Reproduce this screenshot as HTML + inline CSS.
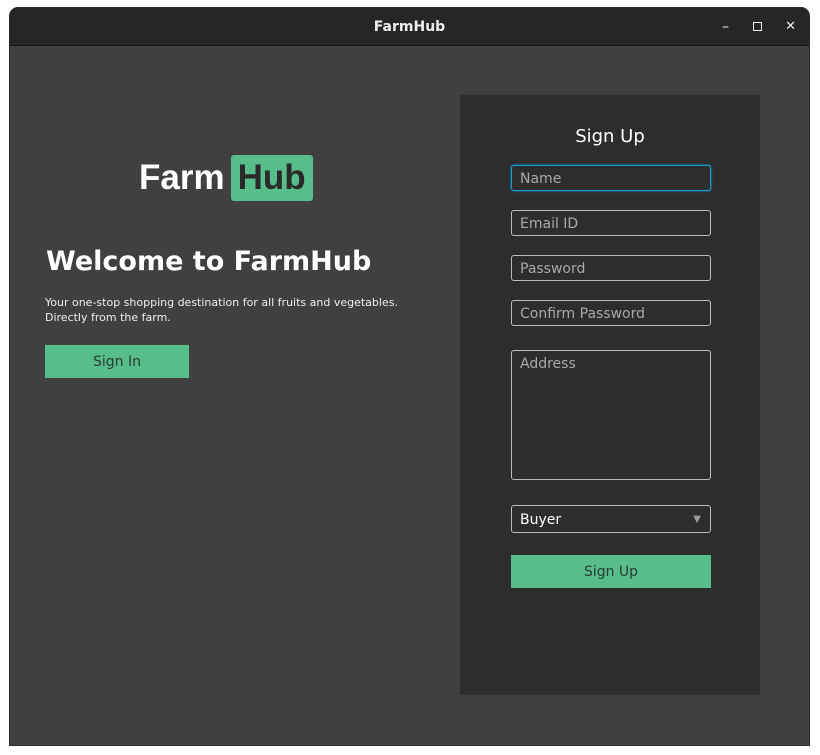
<!DOCTYPE html>
<html><head><style>
body{margin:0;width:820px;height:755px;background:#fff;position:relative;overflow:hidden;font-family:"DejaVu Sans","Liberation Sans",sans-serif;}
.win{position:absolute;left:9px;top:7px;width:801px;height:739px;background:#404040;border:1px solid #2a2a2a;border-radius:9px 9px 0 0;box-sizing:border-box;overflow:hidden}
.tb{position:absolute;left:0;top:0;right:0;height:37px;background:#262626;border-bottom:1px solid #151515;color:#eee;font-weight:bold;font-size:14px;text-align:center;line-height:38px}
.ab{position:absolute;}
.panel{position:absolute;left:460px;top:95px;width:300px;height:600px;background:#2d2d2d}
.in{position:absolute;left:511px;width:200px;height:26px;border:1px solid #bdbdbd;border-radius:3px;box-sizing:border-box;color:#a9a9a9;font-size:14px;padding-left:8px;line-height:26px;background:#2d2d2d}
.btn{position:absolute;background:#57be8b;color:#2a3a32;font-size:14px;text-align:center}
</style></head><body>
<div class="win"><div class="tb">FarmHub
<span style="position:absolute;right:80px;top:0;font-weight:normal">&#8211;</span>
<span style="position:absolute;right:47px;top:14px;width:7px;height:7px;border:1px solid #eee"></span>
<span style="position:absolute;right:13px;top:0;font-weight:normal;font-size:13px">✕</span>
</div></div>
<div class="ab" style="left:139px;top:155px;font-family:'Liberation Sans',sans-serif;font-weight:bold;font-size:35px;color:#fff;line-height:46px">Farm<span style="display:inline-block;background:#57be8b;color:#2a2a2a;border-radius:3px;width:82px;text-align:center;margin-left:6px;height:46px;vertical-align:top;line-height:46px">Hub</span></div>
<div class="ab" style="left:46px;top:246px;font-weight:bold;font-size:27px;color:#fff">Welcome to FarmHub</div>
<div class="ab" style="left:45px;top:295px;font-size:11px;color:#eee;line-height:15px">Your one-stop shopping destination for all fruits and vegetables.<br>Directly from the farm.</div>
<div class="btn" style="left:45px;top:345px;width:144px;height:33px;line-height:35px">Sign In</div>
<div class="panel"></div>
<div class="ab" style="left:460px;width:300px;top:126px;text-align:center;color:#fff;font-size:18px">Sign Up</div>
<div class="in" style="top:165px;border:1px solid #1a9bd6;color:#a9a9a9;box-shadow:0 0 2px #1a9bd6">Name</div>
<div class="in" style="top:210px">Email ID</div>
<div class="in" style="top:255px">Password</div>
<div class="in" style="top:300px">Confirm Password</div>
<div class="in" style="top:350px;height:130px">Address</div>
<div class="in" style="top:505px;height:28px;color:#fff;line-height:28px">Buyer<span style="position:absolute;right:9px;top:0;color:#999;font-size:10px">▼</span></div>
<div class="btn" style="left:511px;top:555px;width:200px;height:33px;line-height:35px">Sign Up</div>
</body></html>
